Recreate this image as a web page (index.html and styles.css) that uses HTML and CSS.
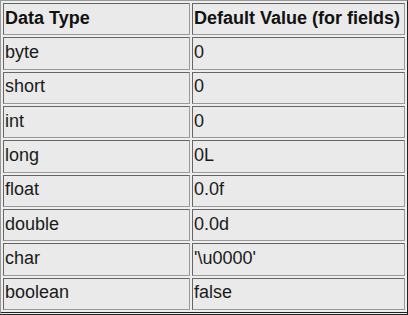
FILE: index.html
```html
<!DOCTYPE html>
<html lang="en">
<head>
  <meta charset="UTF-8">
  <title>Java Default Values</title>
  <link rel="stylesheet" href="styles.css">
</head>
<body>
  <table class="defaults">
    <tr>
      <th>Data Type</th>
      <th>Default Value (for fields)</th>
    </tr>
    <tr><td>byte</td><td>0</td></tr>
    <tr><td>short</td><td>0</td></tr>
    <tr><td>int</td><td>0</td></tr>
    <tr><td>long</td><td>0L</td></tr>
    <tr><td>float</td><td>0.0f</td></tr>
    <tr><td>double</td><td>0.0d</td></tr>
    <tr><td>char</td><td>'\u0000'</td></tr>
    <tr><td>boolean</td><td>false</td></tr>
  </table>
</body>
</html>
```

FILE: styles.css
```css
body {
  margin: 0;
  background: #eeeeee;
  font-family: "Liberation Sans", Arial, sans-serif;
}

.defaults {
  width: 408px;
  height: 315px;
  border-collapse: separate;
  border-spacing: 2px;
  border: 1px solid #999;
  border-right-color: #222;
  border-bottom: 3px double #222;
  background: #eeeeee;
  color: #1a1a1a;
  font-size: 18px;
}

.defaults th,
.defaults td {
  border: 1px solid #999;
  border-top-color: #666;
  border-left-color: #666;
  padding: 0 1px 2px;
  text-align: left;
  background: #eaeaea;
}

.defaults th {
  font-weight: bold;
  color: #111;
}

.defaults td:first-child,
.defaults th:first-child {
  width: 183px;
}
```
